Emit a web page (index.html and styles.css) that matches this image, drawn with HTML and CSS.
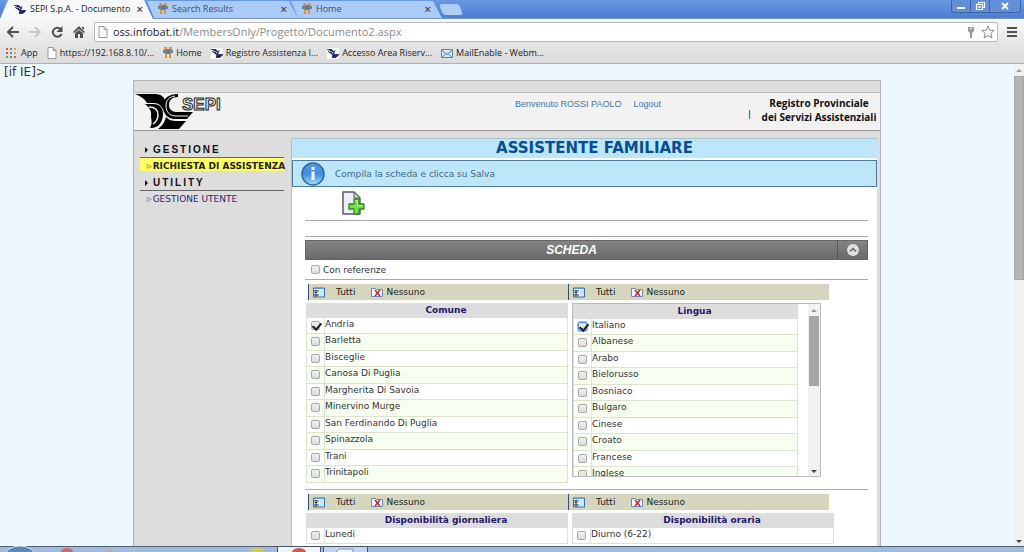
FILE: index.html
```
<!DOCTYPE html>
<html lang="it">
<head>
<meta charset="utf-8">
<title>SEPI S.p.A. - Documento</title>
<link rel="stylesheet" href="styles.css">
</head>
<body>
<svg class="defs" aria-hidden="true">
  <symbol id="sepi" viewBox="0 0 12 10"><path d="M0 1h5l2 3M1 3l4 1 1 3M8 2L6 5l2 1h4L9 9H5z" fill="#1d2363" stroke="#1d2363" stroke-width=".8"/></symbol>
  <symbol id="joomla" viewBox="0 0 10 12"><path d="M1 0h3v3H1zM6 0h3v3H6z" fill="#e8912c"/><path d="M0 3h10v3H0z" fill="#5b86a8"/><path d="M2 6h2v5H2zM6 6h2v5H6z" fill="#e8912c"/><path d="M3 2h4v5H3z" fill="#6c7a78"/></symbol>
  <symbol id="page" viewBox="0 0 10 12"><path d="M1 .5h5L9 3.500V11.500H1zM6 .5v3h3" fill="#fff" stroke="#999"/></symbol>
  <symbol id="all" viewBox="0 0 12 11"><path d="M.5 1h11v9H.5z" fill="#e4f1fb" stroke="#336fa8"/><path d="M1 1h10v1H1z" fill="#5a9ad2"/><path d="M2 3.500h2v2H2zM2 7h2v2H2z" fill="#fff" stroke="#26394c"/><path d="M5 4h1M5 8h1" stroke="#26394c"/><path d="M7 3h4v6H7z" fill="#cfe6f8"/></symbol>
  <symbol id="none" viewBox="0 0 12 11"><path d="M.5 1.500h4l1 1h6v7H.5z" fill="#f4f7fb" stroke="#6d87b4"/><path d="M4 3l5 6M9 3L4 9" stroke="#b5263a" stroke-width="1.500"/></symbol>
</svg>

<header class="browser">
  <nav class="tabs" aria-label="Schede">
    <div class="tab tab-active"><svg class="i12"><use href="#sepi"/></svg><span>SEPI S.p.A. - Documento</span><button aria-label="Chiudi">×</button></div>
    <div class="tab"><svg class="i10"><use href="#joomla"/></svg><span>Search Results</span><button aria-label="Chiudi">×</button></div>
    <div class="tab"><svg class="i10"><use href="#joomla"/></svg><span>Home</span><button aria-label="Chiudi">×</button></div>
    <button class="new-tab" aria-label="Nuova scheda"></button>
    <div class="window-buttons">
      <button aria-label="Riduci"><svg viewBox="0 0 12 10"><path d="M2 6h8v2H2z" fill="#fff"/></svg></button>
      <button aria-label="Ripristina"><svg viewBox="0 0 12 10"><path d="M4.500 3V1.500h6v5H9M2.500 3.500h6v5h-6zM5 5.500h1v1H5z" fill="none" stroke="#fff" stroke-width="1.200"/></svg></button>
      <button class="wide" aria-label="Chiudi finestra"><svg viewBox="0 0 12 10"><path d="M3 2l6 6M9 2L3 8" stroke="#fff" stroke-width="1.800"/></svg></button>
    </div>
  </nav>
  <div class="toolbar">
    <button class="tool" aria-label="Indietro"><svg viewBox="0 0 14 14"><path d="M7 2L2 7l5 5M2 7h11" fill="none" stroke="#505050" stroke-width="2"/></svg></button>
    <button class="tool" aria-label="Avanti"><svg viewBox="0 0 14 14"><path d="M7 2l5 5-5 5M1 7h11" fill="none" stroke="#c8c8c8" stroke-width="2"/></svg></button>
    <button class="tool" aria-label="Ricarica"><svg viewBox="0 0 14 14"><path d="M11 4.500A4.500 4.500 0 1 0 11.500 9" fill="none" stroke="#505050" stroke-width="2"/><path d="M12.500 1v6h-6z" fill="#505050"/></svg></button>
    <button class="tool" aria-label="Pagina iniziale"><svg viewBox="0 0 14 14"><path d="M7 1l6 6-1 1-5-4-5 4-1-1zM10 2h2v3l-2-2z" fill="#505050"/><path d="M3 8l4-3 4 3v5H8V9H6v4H3z" fill="#505050"/></svg></button>
    <div class="address">
      <svg class="i10"><use href="#page"/></svg>
      <a href="#" class="url">oss.infobat.it<span>/MembersOnly/Progetto/Documento2.aspx</span></a>
      <svg class="i10" viewBox="0 0 10 12"><path d="M2 1h6v4L6 7v5H4V7L2 5z" fill="#999"/><path d="M4 2h2v1H4z" fill="#fff"/></svg>
      <svg class="star" viewBox="0 0 14 14"><path d="M7 1l1.700 4.200 4.500.3-3.400 2.900 1.100 4.500L7 10.500l-3.900 2.400 1.100-4.500L.8 5.500l4.500-.3z" fill="#fff" stroke="#888"/></svg>
    </div>
    <button class="tool menu" aria-label="Menu"><svg viewBox="0 0 12 12"><path d="M1 2h10M1 6h10M1 10h10" stroke="#505050" stroke-width="2"/></svg></button>
  </div>
  <nav class="bookmarks" aria-label="Preferiti">
    <a href="#"><svg class="i10" viewBox="0 0 10 10"><path d="M0 1h2M0 5h2M8 9h2" stroke="#d9534a" stroke-width="2"/><path d="M4 1h2M4 9h2M0 9h2" stroke="#5aa454" stroke-width="2"/><path d="M8 1h2M8 5h2" stroke="#e8a33c" stroke-width="2"/><path d="M4 5h2" stroke="#4d7fd0" stroke-width="2"/></svg>App</a>
    <a href="#"><svg class="i10"><use href="#page"/></svg>https://192.168.8.10/...</a>
    <a href="#"><svg class="i10"><use href="#joomla"/></svg>Home</a>
    <a href="#"><svg class="i12 white"><use href="#sepi"/></svg>Registro Assistenza I...</a>
    <a href="#"><svg class="i12 white"><use href="#sepi"/></svg>Accesso Area Riserv...</a>
    <a href="#"><svg class="i12" viewBox="0 0 12 10"><path d="M.5 1h11v8H.5z" fill="#d5e8f8" stroke="#5484b4"/><path d="M1 2l5 4 5-4M1 9l4-4M11 9L7 5" fill="none" stroke="#5484b4"/></svg>MailEnable - Webm...</a>
  </nav>
</header>

<div class="viewport">
  <div class="canvas">
    <p class="stray">[if IE]&gt;</p>
    <div class="site">
      <div class="strip"></div>
      <header class="banner">
        <svg class="logo" viewBox="0 0 90 38">
          <path d="M1 1h20c7 0 10 4 11 9-3 3-3 6-2 9-2-6-5-9-10-9h-7C10 5 6 3 1 1z"/>
          <path d="M11 11h8c7 0 10 4 10 10 0 7-4 14-12 14h-1c3-5 1-8 1-12 1-5-2-9-6-12z"/>
          <path d="M15 14c6 0 9 3 9 8 0 4-2 7-5 9" fill="none" stroke="#f2f2f2" stroke-width="1.500"/>
          <path d="M44 1v3c-6 0-9 3-9 8 0 4 3 7 7 7h17l-6 7H41c-8 0-12-6-12-13C29 5 35 1 44 1z"/>
          <path d="M32 24c3 3 6 4 10 4h10l-7 8H24c4-3 7-7 8-12z"/>
          <path d="M41 3c-6 1-9 4-9 10 0 6 4 10 10 10h12" fill="none" stroke="#f2f2f2"/>
          <text x="48" y="17" class="logo-text">SEPI</text>
        </svg>
        <p class="welcome"><span>Benvenuto ROSSI PAOLO</span><a href="#">Logout</a></p>
        <span class="bar">|</span>
        <p class="register">Registro Provinciale<br>dei Servizi Assistenziali</p>
      </header>
      <div class="columns">
        <nav class="side">
          <h2>GESTIONE</h2>
          <a href="#" class="current">RICHIESTA DI ASSISTENZA</a>
          <h2>UTILITY</h2>
          <a href="#">GESTIONE UTENTE</a>
        </nav>
        <main class="content">
          <h1>ASSISTENTE FAMILIARE</h1>
          <div class="info">
            <svg viewBox="0 0 26 26"><defs><linearGradient id="ball" x2="0" y2="1"><stop stop-color="#5b9be0"/><stop offset=".5" stop-color="#3f8ede"/><stop offset="1" stop-color="#a8dcfc"/></linearGradient></defs><circle cx="13" cy="13" r="11" fill="url(#ball)" stroke="#2c68a8" stroke-width="1.500"/><path d="M11.500 6h3v3h-3zM11.500 10.500h3V19h-3z" fill="#fff"/></svg>
            <span>Compila la scheda e clicca su Salva</span>
          </div>
          <div class="form">
            <div class="actions"><button aria-label="Nuovo"><svg viewBox="0 0 24 26"><path d="M2 2h11l6 6v16H2z" fill="#eeeef2" stroke="#5b5b66" stroke-width="1.500" stroke-linejoin="round"/><path d="M13 2v6h6z" fill="#d0d0d8" stroke="#5b5b66"/><path d="M13 9h5v5h5v5h-5v5h-5v-5H8v-5h5z" fill="#7ddc4b" stroke="#2d8a20" stroke-width="1.300" stroke-linejoin="round"/><path d="M14.500 11h2v4.500h5" fill="none" stroke="#c6f5a4"/></svg></button></div>
            <hr class="rule-wide"><hr>
            <div class="section"><h3>SCHEDA</h3><button aria-label="Comprimi"><svg viewBox="0 0 14 14"><circle cx="7" cy="7" r="6" fill="#e0e0e0"/><path d="M4 8.500L7 5.500l3 3" fill="none" stroke="#666" stroke-width="1.500"/></svg></button></div>
            <label class="refs"><input type="checkbox">Con referenze</label>
            <hr>
            <div class="pickers">
              <div class="picker"><button><svg class="i12"><use href="#all"/></svg>Tutti</button><button class="clear"><svg class="i12"><use href="#none"/></svg>Nessuno</button></div>
              <div class="picker"><button><svg class="i12"><use href="#all"/></svg>Tutti</button><button class="clear"><svg class="i12"><use href="#none"/></svg>Nessuno</button></div>
            </div>
            <div class="lists">
              <table>
                <thead><tr><th class="tick"></th><th>Comune</th></tr></thead>
                <tbody>
                <tr><td><input type="checkbox" id="c1" checked></td><td><label for="c1">Andria</label></td></tr>
                <tr><td><input type="checkbox" id="c2"></td><td><label for="c2">Barletta</label></td></tr>
                <tr><td><input type="checkbox" id="c3"></td><td><label for="c3">Bisceglie</label></td></tr>
                <tr><td><input type="checkbox" id="c4"></td><td><label for="c4">Canosa Di Puglia</label></td></tr>
                <tr><td><input type="checkbox" id="c5"></td><td><label for="c5">Margherita Di Savoia</label></td></tr>
                <tr><td><input type="checkbox" id="c6"></td><td><label for="c6">Minervino Murge</label></td></tr>
                <tr><td><input type="checkbox" id="c7"></td><td><label for="c7">San Ferdinando Di Puglia</label></td></tr>
                <tr><td><input type="checkbox" id="c8"></td><td><label for="c8">Spinazzola</label></td></tr>
                <tr><td><input type="checkbox" id="c9"></td><td><label for="c9">Trani</label></td></tr>
                <tr><td><input type="checkbox" id="c10"></td><td><label for="c10">Trinitapoli</label></td></tr>
                </tbody>
              </table>
              <div class="scrollbox">
                <div class="clip">
                <table>
                  <thead><tr><th class="tick"></th><th>Lingua</th></tr></thead>
                  <tbody>
                  <tr><td><input type="checkbox" id="l1" class="focused" checked></td><td><label for="l1">Italiano</label></td></tr>
                  <tr><td><input type="checkbox" id="l2"></td><td><label for="l2">Albanese</label></td></tr>
                  <tr><td><input type="checkbox" id="l3"></td><td><label for="l3">Arabo</label></td></tr>
                  <tr><td><input type="checkbox" id="l4"></td><td><label for="l4">Bielorusso</label></td></tr>
                  <tr><td><input type="checkbox" id="l5"></td><td><label for="l5">Bosniaco</label></td></tr>
                  <tr><td><input type="checkbox" id="l6"></td><td><label for="l6">Bulgaro</label></td></tr>
                  <tr><td><input type="checkbox" id="l7"></td><td><label for="l7">Cinese</label></td></tr>
                  <tr><td><input type="checkbox" id="l8"></td><td><label for="l8">Croato</label></td></tr>
                  <tr><td><input type="checkbox" id="l9"></td><td><label for="l9">Francese</label></td></tr>
                  <tr><td><input type="checkbox" id="l10"></td><td><label for="l10">Inglese</label></td></tr>
                  </tbody>
                </table>
                </div>
                <div class="scrollbar"><i class="up"></i><i class="thumb short"></i><i class="down"></i></div>
              </div>
            </div>
            <hr>
            <div class="pickers">
              <div class="picker"><button><svg class="i12"><use href="#all"/></svg>Tutti</button><button class="clear"><svg class="i12"><use href="#none"/></svg>Nessuno</button></div>
              <div class="picker"><button><svg class="i12"><use href="#all"/></svg>Tutti</button><button class="clear"><svg class="i12"><use href="#none"/></svg>Nessuno</button></div>
            </div>
            <div class="lists">
              <table>
                <thead><tr><th class="tick"></th><th>Disponibilità giornaliera</th></tr></thead>
                <tbody><tr><td><input type="checkbox" id="g1"></td><td><label for="g1">Lunedi</label></td></tr></tbody>
              </table>
              <table>
                <thead><tr><th class="tick"></th><th>Disponibilità oraria</th></tr></thead>
                <tbody><tr><td><input type="checkbox" id="o1"></td><td><label for="o1">Diurno (6-22)</label></td></tr></tbody>
              </table>
            </div>
          </div>
        </main>
      </div>
    </div>
  </div>
  <div class="scrollbar"><i class="up"></i><i class="thumb"></i><i class="down"></i></div>
</div>

<footer class="taskbar">
  <svg viewBox="0 0 368 6" class="task-icons">
    <ellipse cx="20" cy="8" rx="14" ry="8" fill="#5f86b4" stroke="#dbe8f5"/>
    <ellipse cx="67" cy="6" rx="6" ry="4" fill="#cf6a62"/>
    <ellipse cx="110" cy="7" rx="5" ry="3" fill="#c9a58c"/>
    <ellipse cx="257" cy="6" rx="7" ry="4" fill="#d9cb4e"/>
    <path d="M277.500 7V.5h43V7z" fill="#f1f5fa" stroke="#44566e"/>
    <ellipse cx="299" cy="6" rx="7" ry="4" fill="#d9564a"/>
    <path d="M323.500 7V.5h44V7z" fill="#c4d4e9" stroke="#44566e"/>
    <path d="M335 7l4-4h14v4z" fill="#eef3fa" stroke="#7893c4"/>
  </svg>
</footer>
</body>
</html>
```
FILE: styles.css
```
* { box-sizing: border-box; }
body { margin: 0; height: 100vh; display: flex; flex-direction: column; overflow: hidden; font: 9px/12px "DejaVu Sans", Verdana, sans-serif; color: #333; }
p, h1, h2, h3 { margin: 0; font-weight: normal; }
a { color: inherit; text-decoration: none; }
button { border: 0; padding: 0; background: none; font: inherit; color: inherit; display: flex; align-items: center; }
svg { display: block; flex: none; }
.defs { display: none; }
.i10 { width: 10px; height: 12px; }
.i12 { width: 12px; height: 11px; }
.white { background: #fff; }

.browser { flex: none; font-family: "Open Sans", "Noto Sans", sans-serif; }
.tabs { display: flex; height: 19px; padding-left: 6px; background: linear-gradient(#6999e2, #4c7dd2); border-bottom: 1px solid #7a93b8; }
.tab { position: relative; z-index: 0; width: 144px; display: flex; align-items: center; gap: 4px; padding: 0 7px 0 8px; color: #3c4f6c; }
.tab::before { content: ""; position: absolute; z-index: -1; inset: 1px -4px 0 -3px; background: #a9cbf6; clip-path: polygon(0 0, calc(100% - 9px) 0, 100% 100%, 7px 100%); }
.tab-active { color: #222; }
.tab-active::before { background: #f7f8fa; inset: 0 -3px -1px -6px; clip-path: polygon(0 100%, 8px 0, calc(100% - 9px) 0, 100% 100%); }
.tab span { flex: 1; white-space: nowrap; }
.tab button { font: bold 11px/12px "Liberation Sans", sans-serif; color: #555; }
.new-tab { width: 24px; height: 11px; margin: 4px 0 0 0; background: #aecdf7; border-radius: 3px; transform: skewX(20deg); width: 20px; margin-left: 3px; }
.window-buttons { display: flex; margin: 0 3px 0 auto; height: 13px; border: 1px solid #3b63a8; border-top: 0; border-radius: 0 0 3px 3px; background: #628fd8; }
.window-buttons button { width: 19px; justify-content: center; border-right: 1px solid #3b63a8; }
.window-buttons .wide { width: 30px; border: 0; }
.window-buttons svg { width: 12px; height: 10px; }

.toolbar { display: flex; align-items: center; gap: 8px; height: 24px; padding: 2px 6px 0 6px; background: linear-gradient(#f8f8f8, #e6e6e6); }
.tool svg { width: 14px; height: 14px; }
.menu svg { width: 12px; height: 12px; }
.address { flex: 1; display: flex; align-items: center; gap: 5px; height: 20px; padding: 0 2px 0 3px; background: #fff; border: 1px solid #b8b8b8; border-radius: 2px; }
.url { flex: 1; font-size: 11px; color: #222; }
.url span { color: #8b8b8b; }
.star { width: 14px; height: 14px; }
.bookmarks { display: flex; align-items: center; gap: 9px; height: 21px; padding: 0 6px; background: linear-gradient(#e5e5e5, #dcdcdc); border-bottom: 1px solid #b0b0b0; color: #222; }
.bookmarks a { display: flex; align-items: center; gap: 3px; white-space: nowrap; }
.bookmarks a:first-child { gap: 5px; }

.viewport { flex: 1; min-height: 0; display: flex; background: #edf7ff; }
.canvas { flex: 1; overflow: hidden; }
.stray { padding: 1px 4px 0; font: 12px/15px "DejaVu Sans", sans-serif; }
.site { max-width: 748px; margin: 0 auto; border: 1px solid #b4b4b4; background: #ddd; }
.strip { height: 12px; border-bottom: 1px solid #bbb; }
.banner { display: flex; height: 38px; background: #f2f2f2; border-bottom: 1px solid #999; }
.logo { width: 90px; height: 38px; }
.logo-text { font: bold 17px "Liberation Sans", sans-serif; fill: #f2f2f2; stroke: #222; stroke-width: 1; }
.welcome { flex: 1; display: flex; justify-content: flex-end; gap: 12px; padding-top: 5px; font: 9px/12px "Liberation Sans", sans-serif; color: #3e78ab; }
.bar { width: 90px; padding: 15px 0 0; text-align: right; color: #222; }
.register { width: 129px; padding: 3px 3px 0 0; text-align: right; font: bold 10px/14px "Open Sans", sans-serif; white-space: nowrap; color: #111; }
.register { padding-left: 10px; text-align: center; }

.columns { display: flex; }
.side { width: 157px; flex: none; padding: 12px 7px 0 6px; }
.side h2 { display: flex; align-items: center; gap: 5px; height: 15px; padding-left: 5px; border-bottom: 1px solid #666; font: bold 10px/14px "Liberation Sans", sans-serif; letter-spacing: 2px; color: #111; }
.side h2::before { content: ""; border: 3px solid transparent; border-left-color: #111; border-right: 0; }
.side a { display: flex; align-items: center; gap: 1px; height: 13px; margin-bottom: 5px; padding: 2px 0 0 7px; color: #2b2875; white-space: nowrap; }
.side a::before { content: "▷"; font: 6px/12px "DejaVu Sans", sans-serif; }
.side .current { background: #ff6; color: #222; font-weight: bold; }

.content { flex: 1; margin: 7px 3px 0 0; background: #fff; border-left: 1px solid #bbb; min-width: 0; }
h1 { height: 20px; background: #bde6f8; border-top: 1px solid #a8c4d2; color: #064e91; font: bold 15px/19px "DejaVu Sans", sans-serif; text-align: center; padding-left: 20px; }
.info { display: flex; align-items: center; gap: 9px; height: 27px; margin-top: 2px; padding-left: 7px; background: #bde6f8; border: 1px solid #4e7d9b; color: #3c6a8a; }
.info svg { width: 26px; height: 26px; }
.form { padding: 0 9px 0 13px; }
.actions { height: 33px; padding: 3px 0 0 36px; }
.actions svg { width: 24px; height: 26px; }
hr { height: 1px; margin: 0; border: 0; background: #aaa; }
.rule-wide { margin-bottom: 15px; }
.section { display: flex; height: 20px; margin-top: 3px; background: linear-gradient(#858585, #6a6a6a); border: 1px solid #666; color: #fff; }
.section h3 { flex: 1; font: italic bold 12px/18px "Liberation Sans", sans-serif; text-align: center; }
.section button { width: 30px; justify-content: center; border-left: 1px solid #555; }
.section svg { width: 14px; height: 14px; }
.refs { display: flex; align-items: center; gap: 3px; height: 19px; padding-left: 6px; }
input { appearance: none; position: relative; width: 9px; height: 9px; margin: 0; border: 1px solid #a8a8a8; border-radius: 2px; background: linear-gradient(#f0f0f0, #dcdcdc); }
input:checked::after { content: ""; position: absolute; left: 2px; top: -1px; width: 4px; height: 7px; border: solid #222; border-width: 0 2px 2px 0; transform: rotate(40deg); }
.focused { border-color: #4b86d8; box-shadow: 0 0 0 1px #9fc1f0; }
.pickers { display: grid; grid-template-columns: 260px 261px; height: 16px; margin: 4px 0 3px 3px; }
.picker { display: flex; align-items: center; padding-left: 4px; background: #d5d6bd; border-left: 1px solid #334c78; color: #222; }
.picker button { gap: 11px; }
.picker .clear { gap: 3px; margin-left: 16px; }
.lists { display: grid; grid-template-columns: 262px 262px; gap: 4px; align-items: start; margin: 0 0 6px 1px; }
table { width: 100%; border-collapse: collapse; table-layout: fixed; }
th, td { padding: 0; border: 1px solid #dde3cd; vertical-align: top; }
th { height: 14px; background: #ddd; border-color: #ddd; color: #1f1768; font-weight: bold; line-height: 12px; }
.tick { width: 18px; }
td { height: 16px; line-height: 12px; }
td:first-child { padding: 2px 0 0 4px; line-height: 0; }
td:first-child input { vertical-align: top; margin-top: 1px; }
tbody tr:nth-child(even) { background: #f7fff0; }
tbody tr:nth-child(even) td { height: 17px; }
.scrollbox { display: flex; width: 249px; height: 174px; border: 1px solid #bbb; }
.clip { flex: 1; overflow: hidden; padding-right: 10px; }
.scrollbar { width: 10px; flex: none; display: flex; flex-direction: column; align-items: center; background: #f1f1f1; }
.scrollbox .scrollbar { width: 12px; }
.up, .down { border: 3px solid transparent; }
.up { margin: 2px 0 4px; border-bottom-color: #999; }
.down { margin-top: auto; border-top-color: #444; }
.thumb { width: 10px; height: 204px; background: #b5b5b5; border: 1px solid #a5a5a5; }
.short { height: 70px; background: #a5a5a5; }

.taskbar { flex: none; height: 6px; border-top: 1px solid #4b5f78; background: #a2badb; }
.task-icons { width: 368px; height: 6px; margin-top: -1px; }
```
